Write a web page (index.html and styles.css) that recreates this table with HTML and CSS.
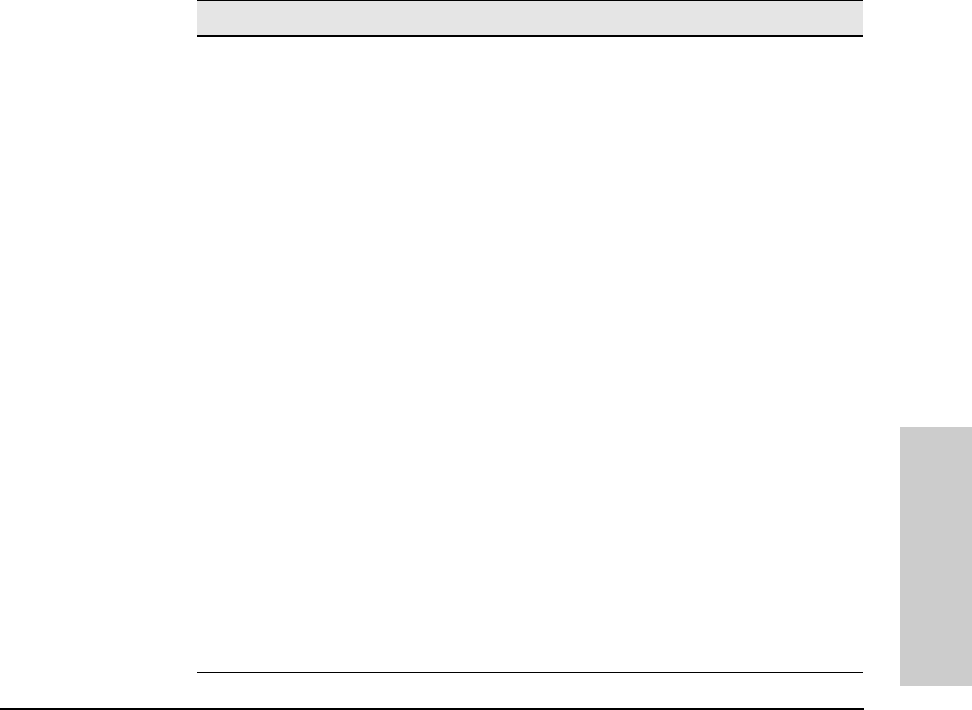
FILE: index.html
```html
<!DOCTYPE html>
<html lang="en">
<head>
  <meta charset="UTF-8" />
  <meta name="viewport" content="width=device-width, initial-scale=1.0" />
  <title>Page</title>
  <link rel="stylesheet" href="styles.css">
</head>
<body>
  <div class="sheet">
    <div class="page">
      <div class="head-bar"></div>
      <div class="body-area"></div>
      <div class="foot-space"></div>
      <div class="foot-rule"></div>
    </div>
    <div class="edge">
      <div class="thumb-tab"></div>
    </div>
  </div>
</body>
</html>
```

FILE: styles.css
```css
* {
  box-sizing: border-box;
  margin: 0;
  padding: 0;
}
body {
  background: #fff;
  font-family: "Liberation Sans", Arial, sans-serif;
  overflow: hidden;
}
.sheet {
  display: flex;
  width: 972px;
  height: 710px;
}
.page {
  display: flex;
  flex-direction: column;
  width: 864px;
}
.head-bar {
  margin-left: 197px;
  width: 666px;
  height: 37px;
  background: #e5e5e5;
  border-top: 1px solid #000;
  border-bottom: 2px solid #000;
}
.body-area {
  margin-left: 197px;
  width: 666px;
  height: 636px;
  border-bottom: 1px solid #000;
}
.foot-space {
  flex: 1;
}
.foot-rule {
  height: 2px;
  background: #000;
}
.edge {
  flex: 1;
  display: flex;
  justify-content: flex-end;
}
.thumb-tab {
  margin-top: 427px;
  width: 72px;
  height: 259px;
  background: #cccccc;
}
```
